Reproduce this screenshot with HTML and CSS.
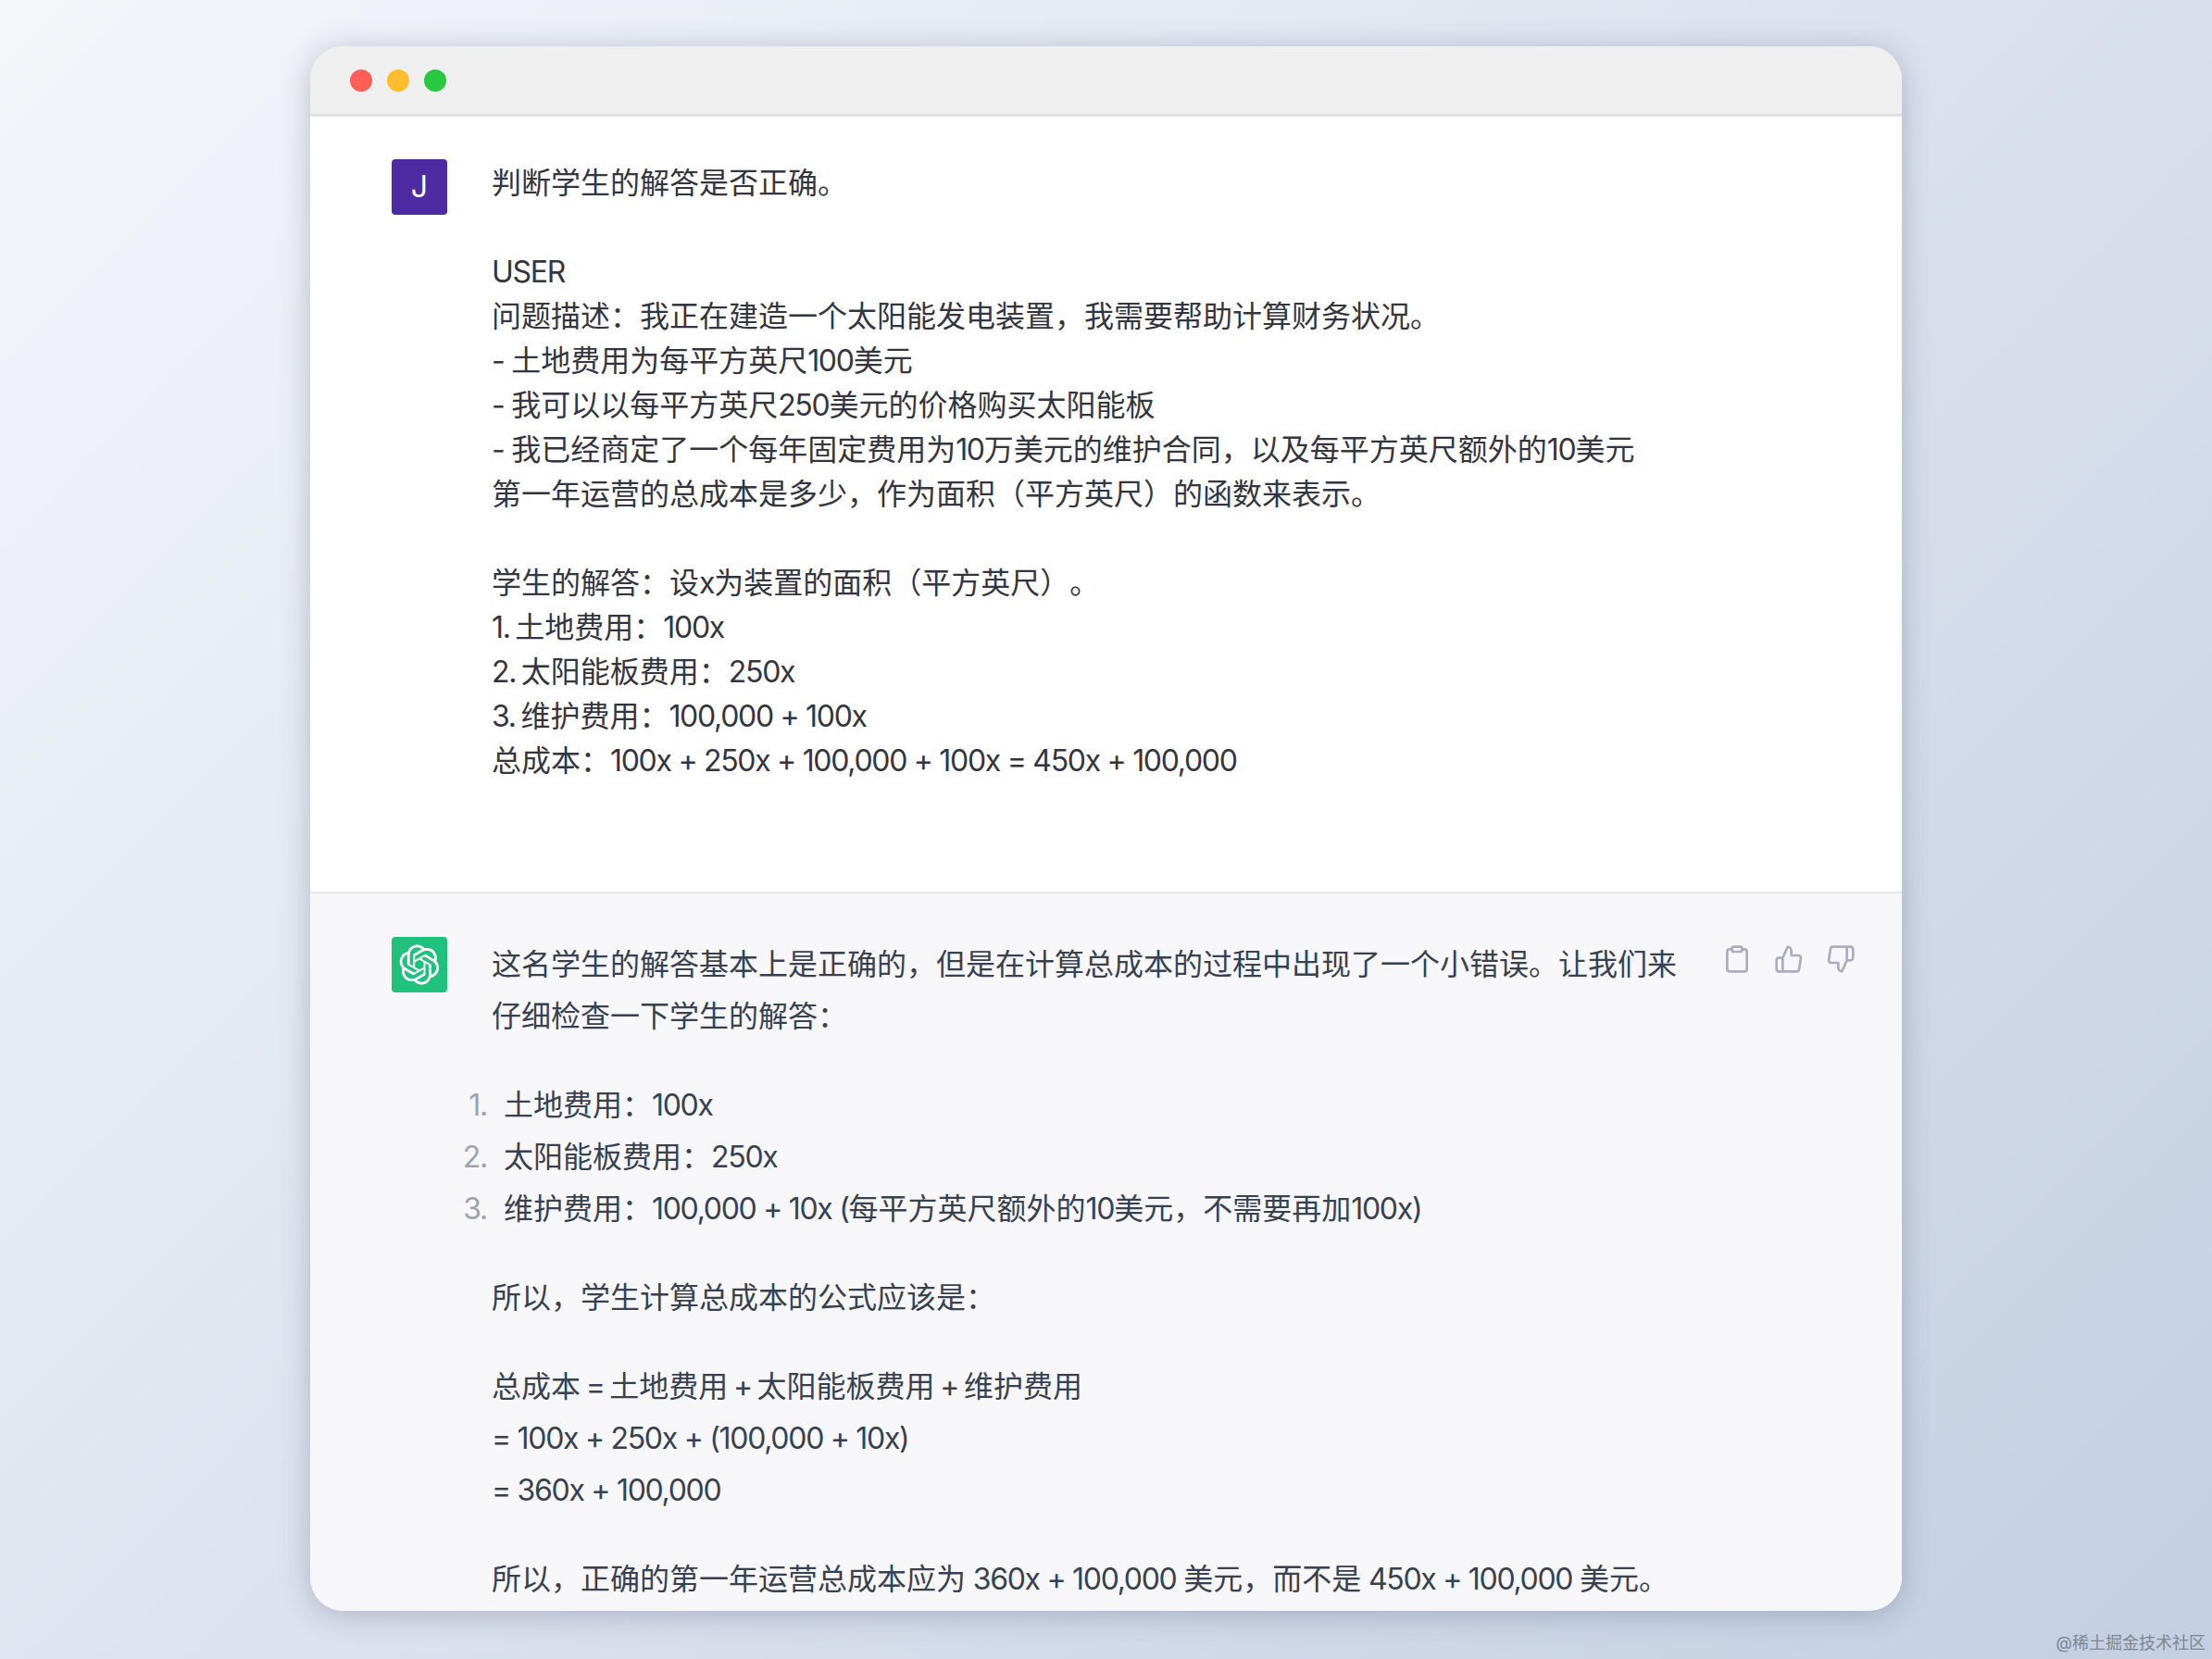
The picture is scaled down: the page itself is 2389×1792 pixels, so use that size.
FILE: index.html
```html
<!DOCTYPE html>
<html lang="zh-CN">
<head>
    <meta charset="UTF-8">
    <title>ChatGPT</title>
    <link rel="stylesheet" href="styles.css">
</head>
<body>
    <div class="window">
        <div class="titlebar">
            <span class="dot dot-red"></span>
            <span class="dot dot-yellow"></span>
            <span class="dot dot-green"></span>
        </div>

        <div class="message message-user">
            <div class="avatar avatar-user">J</div>
            <div class="user-text">判断学生的解答是否正确。

<span class="en">USER</span>
问题描述：我正在建造一个太阳能发电装置，我需要帮助计算财务状况。
<span class="en">- </span>土地费用为每平方英尺<span class="en">100</span>美元
<span class="en">- </span>我可以以每平方英尺<span class="en">250</span>美元的价格购买太阳能板
<span class="en">- </span>我已经商定了一个每年固定费用为<span class="en">10</span>万美元的维护合同，以及每平方英尺额外的<span class="en">10</span>美元
第一年运营的总成本是多少，作为面积（平方英尺）的函数来表示。

学生的解答：设<span class="en">x</span>为装置的面积（平方英尺）。
<span class="en tight">1. </span>土地费用：<span class="en">100x</span>
<span class="en tight">2. </span>太阳能板费用：<span class="en">250x</span>
<span class="en tight">3. </span>维护费用：<span class="en">100,000 + 100x</span>
总成本：<span class="en">100x + 250x + 100,000 + 100x = 450x + 100,000</span></div>
        </div>

        <div class="message message-bot">
            <div class="avatar avatar-bot">
                <svg class="logo" viewBox="0 0 41 41" fill="none">
                    <path fill="currentColor" d="M37.5324 16.8707C37.9808 15.5241 38.1363 14.0974 37.9886 12.6859C37.8409 11.2744 37.3934 9.91076 36.676 8.68622C35.6126 6.83404 33.9882 5.3676 32.0373 4.4985C30.0864 3.62941 27.9098 3.40259 25.8215 3.85078C24.8796 2.7893 23.7219 1.94125 22.4257 1.36341C21.1295 0.785575 19.7249 0.491269 18.3058 0.500197C16.1708 0.495044 14.0893 1.16803 12.3614 2.42214C10.6335 3.67624 9.34853 5.44666 8.6917 7.47815C7.30085 7.76286 5.98686 8.3414 4.8377 9.17505C3.68854 10.0087 2.73073 11.0782 2.02839 12.312C0.956464 14.1591 0.498905 16.2988 0.721698 18.4228C0.944492 20.5467 1.83612 22.5449 3.268 24.1293C2.81966 25.4759 2.66413 26.9026 2.81182 28.3141C2.95951 29.7256 3.40701 31.0892 4.12437 32.3138C5.18791 34.1659 6.8123 35.6322 8.76321 36.5013C10.7141 37.3704 12.8907 37.5973 14.9789 37.1492C15.9208 38.2107 17.0786 39.0587 18.3747 39.6366C19.6709 40.2144 21.0755 40.5087 22.4946 40.4998C24.6307 40.5054 26.7133 39.8321 28.4418 38.5772C30.1704 37.3223 31.4556 35.5506 32.1119 33.5179C33.5027 33.2332 34.8167 32.6547 35.9659 31.821C37.115 30.9874 38.0728 29.9178 38.7752 28.684C39.8458 26.8371 40.3023 24.6979 40.0789 22.5748C39.8556 20.4517 38.9639 18.4544 37.5324 16.8707ZM22.4978 37.8849C20.7443 37.8874 19.0459 37.2733 17.6994 36.1501C17.7601 36.117 17.8666 36.0586 17.936 36.0161L25.9004 31.4156C26.1003 31.3019 26.2663 31.137 26.3813 30.9378C26.4964 30.7386 26.5563 30.5124 26.5549 30.2825V19.0542L29.9213 20.998C29.9389 21.0068 29.9541 21.0198 29.9656 21.0359C29.977 21.052 29.9842 21.0707 29.9867 21.0902V30.3889C29.9842 32.375 29.1946 34.2791 27.7909 35.6841C26.3872 37.0892 24.4838 37.8806 22.4978 37.8849ZM6.39227 31.0064C5.51397 29.4888 5.19742 27.7107 5.49804 25.9832C5.55718 26.0187 5.66048 26.0818 5.73461 26.1244L13.699 30.7248C13.8975 30.8408 14.1233 30.902 14.3532 30.902C14.583 30.902 14.8088 30.8408 15.0073 30.7248L24.731 25.1103V28.9979C24.7321 29.0177 24.7283 29.0376 24.7199 29.0556C24.7115 29.0736 24.6988 29.0893 24.6829 29.1012L16.6317 33.7497C14.9096 34.7416 12.8643 35.0097 10.9447 34.4954C9.02506 33.9811 7.38785 32.7263 6.39227 31.0064ZM4.29707 13.6194C5.17156 12.0998 6.55279 10.9364 8.19885 10.3327C8.19885 10.4013 8.19491 10.5228 8.19491 10.6071V19.808C8.19351 20.0378 8.25334 20.2638 8.36823 20.4629C8.48312 20.6619 8.64893 20.8267 8.84863 20.9404L18.5723 26.5542L15.206 28.4979C15.1894 28.5089 15.1703 28.5155 15.1505 28.5173C15.1307 28.5191 15.1107 28.516 15.0924 28.5082L7.04046 23.8557C5.32135 22.8601 4.06716 21.2235 3.55289 19.3046C3.03862 17.3858 3.30624 15.3413 4.29707 13.6194ZM31.955 20.0556L22.2312 14.4411L25.5976 12.4981C25.6142 12.4872 25.6333 12.4805 25.6531 12.4787C25.6729 12.4769 25.6928 12.4801 25.7111 12.4879L33.7631 17.1364C34.9967 17.849 36.0017 18.8982 36.6606 20.1613C37.3194 21.4244 37.6047 22.849 37.4832 24.2684C37.3617 25.6878 36.8382 27.0432 35.9743 28.1759C35.1103 29.3086 33.9415 30.1717 32.6047 30.6641C32.6047 30.5947 32.6047 30.4733 32.6047 30.3889V21.188C32.6066 20.9586 32.5474 20.7328 32.4332 20.5338C32.319 20.3348 32.154 20.1698 31.955 20.0556ZM35.3055 15.0128C35.2464 14.9765 35.1431 14.9142 35.069 14.8717L27.1045 10.2712C26.906 10.1554 26.6803 10.0943 26.4504 10.0943C26.2206 10.0943 25.9948 10.1554 25.7963 10.2712L16.0726 15.8858V11.9982C16.0715 11.9783 16.0753 11.9585 16.0837 11.9405C16.0921 11.9225 16.1048 11.9068 16.1207 11.8949L24.1719 7.25025C25.4053 6.53903 26.8158 6.19376 28.2383 6.25482C29.6608 6.31589 31.0364 6.78077 32.2044 7.59508C33.3723 8.40939 34.2842 9.53945 34.8334 10.8531C35.3826 12.1667 35.5464 13.6095 35.3055 15.0128ZM14.2424 21.9419L10.8752 19.9981C10.8576 19.9893 10.8423 19.9763 10.8309 19.9602C10.8195 19.9441 10.8122 19.9254 10.8098 19.9058V10.6071C10.8107 9.18295 11.2173 7.78848 11.9819 6.58696C12.7466 5.38544 13.8377 4.42659 15.1275 3.82264C16.4173 3.21869 17.8524 2.99464 19.2649 3.1767C20.6775 3.35876 22.0089 3.93941 23.1034 4.85067C23.0427 4.88379 22.937 4.94215 22.8668 4.98473L14.9024 9.58517C14.7025 9.69878 14.5366 9.86356 14.4215 10.0626C14.3065 10.2616 14.2466 10.4877 14.2479 10.7175L14.2424 21.9419ZM16.071 17.9991L20.4018 15.4978L24.7325 17.9975V22.9985L20.4018 25.4983L16.071 22.9985V17.9991Z"/>
                </svg>
            </div>
            <div class="bot-text">
                <p>这名学生的解答基本上是正确的，但是在计算总成本的过程中出现了一个小错误。让我们来仔细检查一下学生的解答：</p>
                <ol>
                    <li>土地费用：<span class="en">100x</span></li>
                    <li>太阳能板费用：<span class="en">250x</span></li>
                    <li>维护费用：<span class="en">100,000 + 10x (</span>每平方英尺额外的<span class="en">10</span>美元，不需要再加<span class="en">100x)</span></li>
                </ol>
                <p>所以，学生计算总成本的公式应该是：</p>
                <p>总成本<span class="en tight"> = </span>土地费用<span class="en tight"> + </span>太阳能板费用<span class="en tight"> + </span>维护费用<br><span class="en">= 100x + 250x + (100,000 + 10x)</span><br><span class="en">= 360x + 100,000</span></p>
                <p>所以，正确的第一年运营总成本应为<span class="en"> 360x + 100,000 </span>美元，而不是<span class="en"> 450x + 100,000 </span>美元。</p>
            </div>
            <div class="actions">
                <svg class="icon" viewBox="0 0 24 24">
                    <path d="M16 4h2a2 2 0 0 1 2 2v14a2 2 0 0 1-2 2H6a2 2 0 0 1-2-2V6a2 2 0 0 1 2-2h2"/>
                    <rect x="8" y="2" width="8" height="4" rx="1" ry="1"/>
                </svg>
                <svg class="icon" viewBox="0 0 24 24">
                    <path d="M14 9V5a3 3 0 0 0-3-3l-4 9v11h11.28a2 2 0 0 0 2-1.7l1.38-9a2 2 0 0 0-2-2.3zM7 22H4a2 2 0 0 1-2-2v-7a2 2 0 0 1 2-2h3"/>
                </svg>
                <svg class="icon" viewBox="0 0 24 24">
                    <path d="M10 15v4a3 3 0 0 0 3 3l4-9V2H5.72a2 2 0 0 0-2 1.7l-1.38 9a2 2 0 0 0 2 2.3zm7-13h2.67A2.31 2.31 0 0 1 22 4v7a2.31 2.31 0 0 1-2.33 2H17"/>
                </svg>
            </div>
        </div>
    </div>

    <div class="watermark">@稀土掘金技术社区</div>
</body>
</html>
```

FILE: styles.css
```css
body {
    margin: 0;
    height: 1792px;
    box-sizing: border-box;
    padding: 50px 0 0 335px;
    overflow: hidden;
    background: linear-gradient(135deg, #f4f6fa 0%, #c3cfe2 100%);
    font-family: Inter, "Noto Sans CJK SC", sans-serif;
    font-size: 32px;
    text-spacing-trim: space-all;
}

.en {
    letter-spacing: -1.3px;
}

.tight {
    word-spacing: -2px;
}

.window {
    width: 1719px;
    height: 1690px;
    border-radius: 36px;
    overflow: hidden;
    background: #fff;
    box-shadow: 0 4px 32px rgba(60, 70, 100, 0.3);
}

.titlebar {
    display: flex;
    align-items: center;
    gap: 16px;
    height: 73px;
    padding-left: 43px;
    background: #efefef;
    border-bottom: 3px solid #e2e2e2;
}

.dot {
    width: 24px;
    height: 24px;
    border-radius: 50%;
}

.dot-red { background: #ff5f57; }
.dot-yellow { background: #ffbd2e; }
.dot-green { background: #28c940; }

.message {
    display: flex;
    padding-left: 88px;
}

.message-user {
    height: 791px;
    padding-top: 46px;
    color: #343541;
    line-height: 48px;
}

.message-bot {
    background: #f7f7fa;
    border-top: 2px solid #e5e5e8;
    height: 800px;
    padding-top: 47px;
    color: #374151;
    line-height: 56px;
}

.avatar {
    flex: none;
    display: flex;
    align-items: center;
    justify-content: center;
    width: 60px;
    height: 60px;
    border-radius: 4px;
    color: #fff;
}

.avatar-user { background: #4c2ba3; }
.avatar-bot { background: #20c07d; }

.logo {
    width: 44px;
    height: 44px;
}

.user-text {
    margin: 2px 0 0 48px;
    white-space: pre-wrap;
}

.bot-text {
    width: 1291px;
    margin: 2px 0 0 48px;
}

.bot-text p {
    margin: 0 0 40px;
}

.bot-text ol {
    margin: 0 0 40px;
    padding-left: 13px;
    list-style: none;
    counter-reset: step;
}

.bot-text li {
    position: relative;
    counter-increment: step;
}

.bot-text li::before {
    content: counter(step) ".";
    position: absolute;
    right: 100%;
    margin-right: 18px;
    color: #9ca3af;
    letter-spacing: -1.3px;
}

.actions {
    display: flex;
    gap: 24px;
    margin-left: 38px;
    margin-top: 8px;
}

.icon {
    width: 32px;
    height: 32px;
    fill: none;
    stroke: #acacbe;
    stroke-width: 2;
    stroke-linecap: round;
    stroke-linejoin: round;
}

.watermark {
    position: absolute;
    right: 7px;
    bottom: 5px;
    font-size: 18px;
    line-height: 24px;
    color: #7d8591;
}
```
